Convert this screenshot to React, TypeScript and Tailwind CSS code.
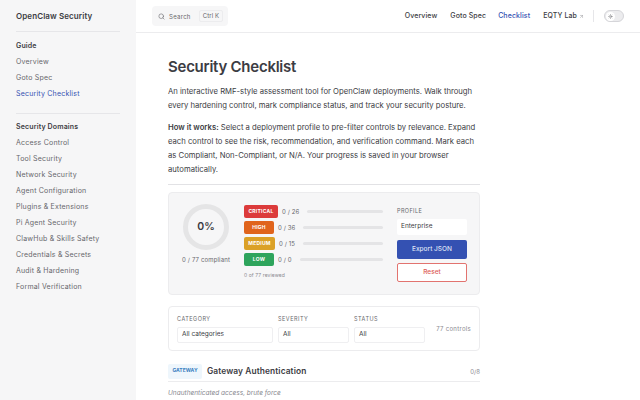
import { Search, ArrowUpRight, Sun } from 'lucide-react';

const guide = ['Overview', 'Goto Spec', 'Security Checklist'];
const domains = [
  'Access Control',
  'Tool Security',
  'Network Security',
  'Agent Configuration',
  'Plugins & Extensions',
  'Pi Agent Security',
  'ClawHub & Skills Safety',
  'Credentials & Secrets',
  'Audit & Hardening',
  'Formal Verification',
];

const severities = [
  { label: 'CRITICAL', count: '0 / 26', color: 'bg-[#dc3b3b]', width: 'w-[34px]' },
  { label: 'HIGH', count: '0 / 36', color: 'bg-[#e0641c]', width: 'w-[30px]' },
  { label: 'MEDIUM', count: '0 / 15', color: 'bg-[#dba127]', width: 'w-[31px]' },
  { label: 'LOW', count: '0 / 0', color: 'bg-[#2ea45c]', width: 'w-[30px]' },
];

function Field({ label, value, className }: { label: string; value: string; className: string }) {
  return (
    <div className={className}>
      <div className="text-[5.5px] leading-[8px] tracking-[0.5px] text-[#67676c]">{label}</div>
      <div className="mt-[4px] flex h-[16px] items-center rounded-[2px] border border-[#efeff1] bg-white pl-[4px] text-[6.5px] text-[#3c3c43]">
        {value}
      </div>
    </div>
  );
}

export default function App() {
  return (
    <div className="flex h-[400px] w-[640px] overflow-hidden bg-white font-['Inter',sans-serif] text-[#3c3c43]">
      <aside className="w-[136px] shrink-0 bg-[#f6f6f7] px-[16px]">
        <div className="flex h-[32px] items-center border-b border-[#e6e6e9] text-[8px] font-semibold tracking-[0.1px] text-[#3c3c43]">
          OpenClaw Security
        </div>
        <div className="mt-[6px] border-b border-[#e6e6e9] pb-[11px]">
          <div className="flex h-[16px] items-center text-[7px] font-semibold tracking-[0.15px]">Guide</div>
          {guide.map((g) => (
            <div
              key={g}
              className={`flex h-[16px] items-center text-[7px] tracking-[0.2px] ${
                g === 'Security Checklist' ? 'text-[#3451b2]' : 'text-[#67676c]'
              }`}
            >
              {g}
            </div>
          ))}
        </div>
        <div className="mt-[5px]">
          <div className="flex h-[16px] items-center text-[7px] font-semibold tracking-[0.15px]">Security Domains</div>
          {domains.map((d) => (
            <div key={d} className="flex h-[16px] items-center text-[7px] tracking-[0.2px] text-[#67676c]">
              {d}
            </div>
          ))}
        </div>
      </aside>

      <div className="min-w-0 flex-1">
        <header className="flex h-[33px] items-center border-b border-[#ececee] pl-[16px] pr-[16px]">
          <div className="flex h-[20px] w-[76px] items-center rounded-[4px] bg-[#f6f6f7] pl-[6px]">
            <Search className="h-[7px] w-[7px] text-[#67676c]" strokeWidth={2} />
            <span className="ml-[4px] text-[6px] tracking-[0.3px] text-[#67676c]">Search</span>
            <span className="ml-[8px] rounded-[2px] border border-[#ececee] px-[3px] text-[6px] leading-[10px] tracking-[0.1px] text-[#67676c]">
              Ctrl K
            </span>
          </div>
          <nav className="ml-auto flex items-center text-[7px] font-medium tracking-[0.1px] text-[#3c3c43]">
            <span>Overview</span>
            <span className="ml-[13px]">Goto Spec</span>
            <span className="ml-[12px] text-[#3451b2]">Checklist</span>
            <span className="ml-[13px] flex items-center">
              EQTY Lab
              <ArrowUpRight className="ml-[2px] h-[5px] w-[5px] text-[#8a8a90]" strokeWidth={2} />
            </span>
            <span className="ml-[9px] h-[12px] w-px bg-[#e6e6e9]" />
            <span className="ml-[10px] flex h-[12px] w-[20px] items-center rounded-full border border-[#d5d5d9] bg-[#ececee] pl-[1px]">
              <span className="flex h-[9px] w-[9px] items-center justify-center rounded-full bg-white">
                <Sun className="h-[5px] w-[5px] text-[#67676c]" strokeWidth={2} />
              </span>
            </span>
          </nav>
        </header>

        <main className="ml-[32px] w-[312px]">
          <h1 className="mt-[23px] text-[15px] font-semibold leading-[22px] tracking-[-0.25px] text-[#3c3c43]">
            Security Checklist
          </h1>
          <p className="mt-[7px] text-[7.7px] leading-[14px] text-[#3c3c43]">
            An interactive RMF-style assessment tool for OpenClaw deployments. Walk through every hardening control,
            mark compliance status, and track your security posture.
          </p>
          <p className="mt-[8px] text-[7.7px] leading-[14px] text-[#3c3c43]">
            <strong className="font-semibold">How it works:</strong> Select a deployment profile to pre-filter controls
            by relevance. Expand each control to see the risk, recommendation, and verification command. Mark each as
            Compliant, Non-Compliant, or N/A. Your progress is saved in your browser automatically.
          </p>
          <div className="mt-[7px] border-t border-[#e2e2e5]" />

          <section className="mt-[7px] flex h-[103px] rounded-[4px] border border-[#ececee] bg-[#f6f6f7] pl-[12px] pr-[12px]">
            <div className="flex w-[50px] flex-col items-center pt-[11px]">
              <div className="flex h-[46px] w-[46px] items-center justify-center rounded-full border-[5px] border-[#e5e5e6] text-[10.5px] font-semibold">
                0%
              </div>
              <div className="mt-[5px] whitespace-nowrap text-[6px] leading-[9px] tracking-[0.15px] text-[#67676c]">
                0 / 77 compliant
              </div>
            </div>
            <div className="ml-[13px] w-[139px] pt-[12px]">
              {severities.map((s) => (
                <div key={s.label} className="mb-[3px] flex h-[13px] items-center">
                  <span
                    className={`flex h-[13px] items-center justify-center rounded-[2px] text-[5px] font-bold tracking-[0.25px] text-white ${s.color} ${s.width}`}
                  >
                    {s.label}
                  </span>
                  <span className="ml-[4px] whitespace-nowrap text-[6px] tracking-[0.1px] text-[#67676c]">{s.count}</span>
                  <span className="ml-[8px] h-[3px] flex-1 rounded-full bg-[#e4e4e6]" />
                </div>
              ))}
              <div className="mt-[5px] text-[5px] leading-[8px] tracking-[0.1px] text-[#8a8a90]">0 of 77 reviewed</div>
            </div>
            <div className="ml-[14px] w-[70px] pt-[14px]">
              <div className="text-[5.5px] leading-[8px] tracking-[0.4px] text-[#67676c]">PROFILE</div>
              <div className="mt-[4px] flex h-[16px] items-center rounded-[2px] bg-white pl-[4px] text-[6.5px] text-[#3c3c43]">
                Enterprise
              </div>
              <div className="mt-[5px] flex h-[19px] items-center justify-center rounded-[2px] bg-[#3451b2] text-[6.5px] font-medium text-[#dfe3f5]">
                Export JSON
              </div>
              <div className="mt-[4px] flex h-[19px] items-center justify-center rounded-[2px] border border-[#e2736f] bg-white text-[6.5px] font-medium text-[#dc5a56]">
                Reset
              </div>
            </div>
          </section>

          <section className="mt-[11px] flex h-[45px] items-center rounded-[4px] border border-[#ececee] bg-white pl-[8px] pr-[8px]">
            <Field label="CATEGORY" value="All categories" className="w-[96px]" />
            <Field label="SEVERITY" value="All" className="ml-[5px] w-[71px]" />
            <Field label="STATUS" value="All" className="ml-[5px] w-[71px]" />
            <span className="mb-[1px] ml-auto text-[6px] tracking-[0.3px] text-[#8a8a90]">77 controls</span>
          </section>

          <div className="mt-[10px] flex h-[20px] items-center">
            <span className="flex h-[15px] w-[34px] items-center justify-center rounded-[2px] bg-[#eef6fc] text-[5px] font-bold text-[#3a7fc1]">
              GATEWAY
            </span>
            <span className="ml-[5px] text-[8.4px] font-semibold tracking-[0.1px] text-[#3c3c43]">
              Gateway Authentication
            </span>
            <span className="ml-auto text-[6px] text-[#8a8a90]">0/8</span>
          </div>
          <div className="border-t border-[#ececee]" />
          <div className="mt-[7px] text-[6.5px] italic text-[#8a8a90]">Unauthenticated access, brute force</div>
        </main>
      </div>
    </div>
  );
}
